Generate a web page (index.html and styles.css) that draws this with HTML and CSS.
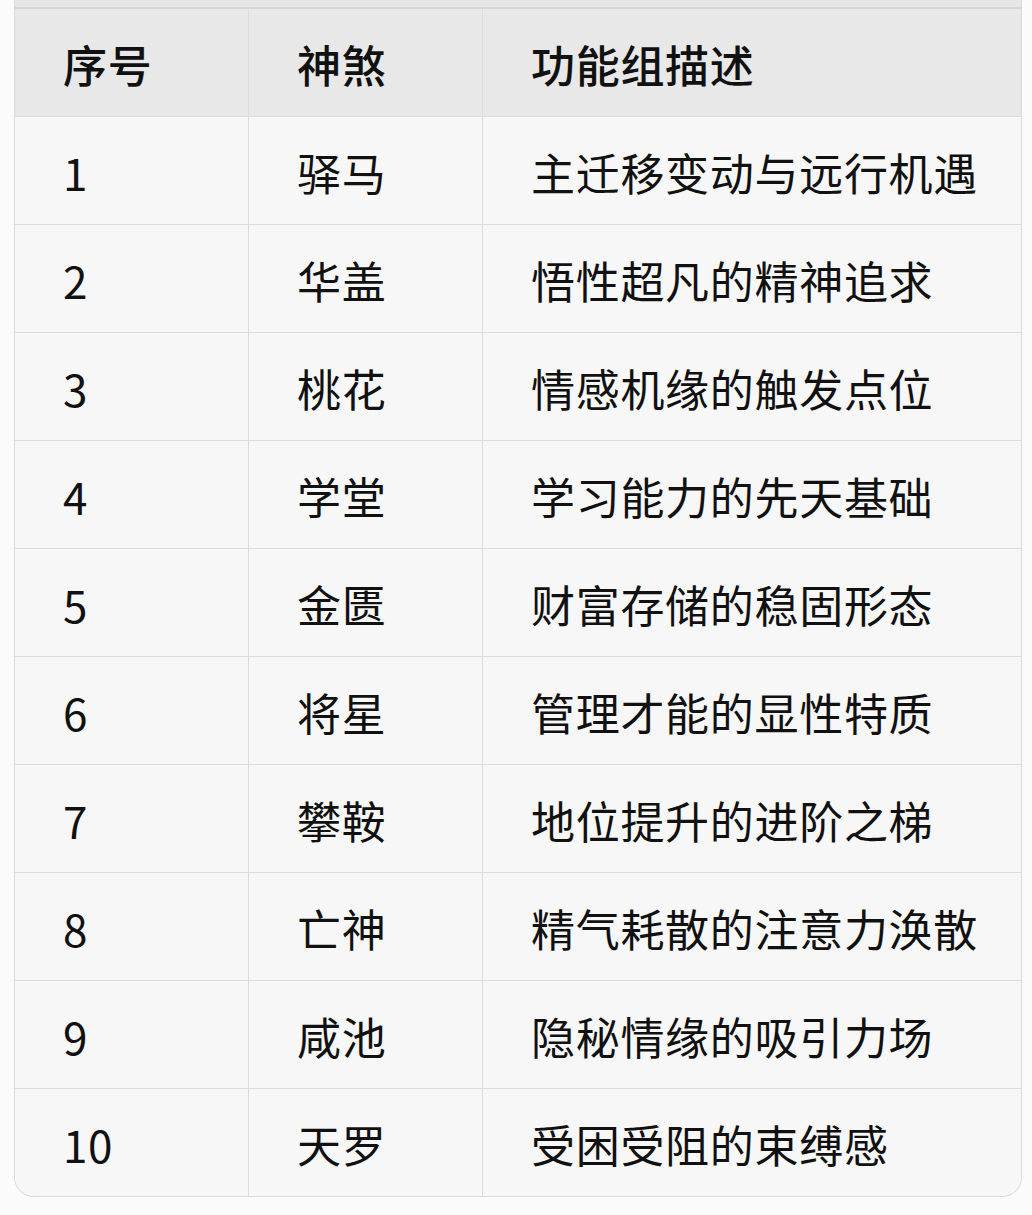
FILE: index.html
```html
<!DOCTYPE html>
<html lang="zh-CN">
<head>
<meta charset="utf-8">
<link rel="stylesheet" href="styles.css">
</head>
<body>
<div class="wrap">
  <div class="edge"></div>
  <table class="grid">
    <colgroup>
      <col class="c1"><col class="c2"><col class="c3">
    </colgroup>
    <thead>
      <tr><th>序号</th><th>神煞</th><th>功能组描述</th></tr>
    </thead>
    <tbody>
      <tr><td>1</td><td>驿马</td><td>主迁移变动与远行机遇</td></tr>
      <tr><td>2</td><td>华盖</td><td>悟性超凡的精神追求</td></tr>
      <tr><td>3</td><td>桃花</td><td>情感机缘的触发点位</td></tr>
      <tr><td>4</td><td>学堂</td><td>学习能力的先天基础</td></tr>
      <tr><td>5</td><td>金匮</td><td>财富存储的稳固形态</td></tr>
      <tr><td>6</td><td>将星</td><td>管理才能的显性特质</td></tr>
      <tr><td>7</td><td>攀鞍</td><td>地位提升的进阶之梯</td></tr>
      <tr><td>8</td><td>亡神</td><td>精气耗散的注意力涣散</td></tr>
      <tr><td>9</td><td>咸池</td><td>隐秘情缘的吸引力场</td></tr>
      <tr><td>10</td><td>天罗</td><td>受困受阻的束缚感</td></tr>
    </tbody>
  </table>
</div>
</body>
</html>
```

FILE: styles.css
```css
html, body {
  margin: 0;
  padding: 0;
  background: #fbfbfb;
}
body {
  font-family: "Noto Sans CJK SC", "Noto Sans", sans-serif;
  color: #111;
}
.wrap {
  margin-left: 14px;
  width: 1006px;
  border: 1px solid #dadada;
  border-top: none;
  border-radius: 0 0 20px 20px;
  overflow: hidden;
  background: #f7f7f7;
}
.edge {
  height: 7px;
  background: #e6e6e6;
  border-bottom: 2px solid #d5d5d5;
}
.grid {
  width: 100%;
  border-collapse: separate;
  border-spacing: 0;
  table-layout: fixed;
}
.c1 { width: 234px; }
.c2 { width: 234px; }
.grid th, .grid td {
  text-align: left;
  padding: 3px 0 0 48px;
  font-size: 44px;
  line-height: 1;
  letter-spacing: 0.7px;
  white-space: nowrap;
  border-right: 1px solid #dcdcdc;
  border-bottom: 1px solid #dcdcdc;
  box-sizing: border-box;
}
.grid th:last-child, .grid td:last-child {
  border-right: none;
}
.grid tbody tr:last-child td {
  border-bottom: none;
}
.grid th {
  height: 108px;
  background: #e8e8e8;
  font-weight: 500;
}
.grid td {
  height: 108px;
  background: #f7f7f7;
  font-weight: 400;
}
.grid tbody tr:last-child td {
  height: 107px;
}
```
